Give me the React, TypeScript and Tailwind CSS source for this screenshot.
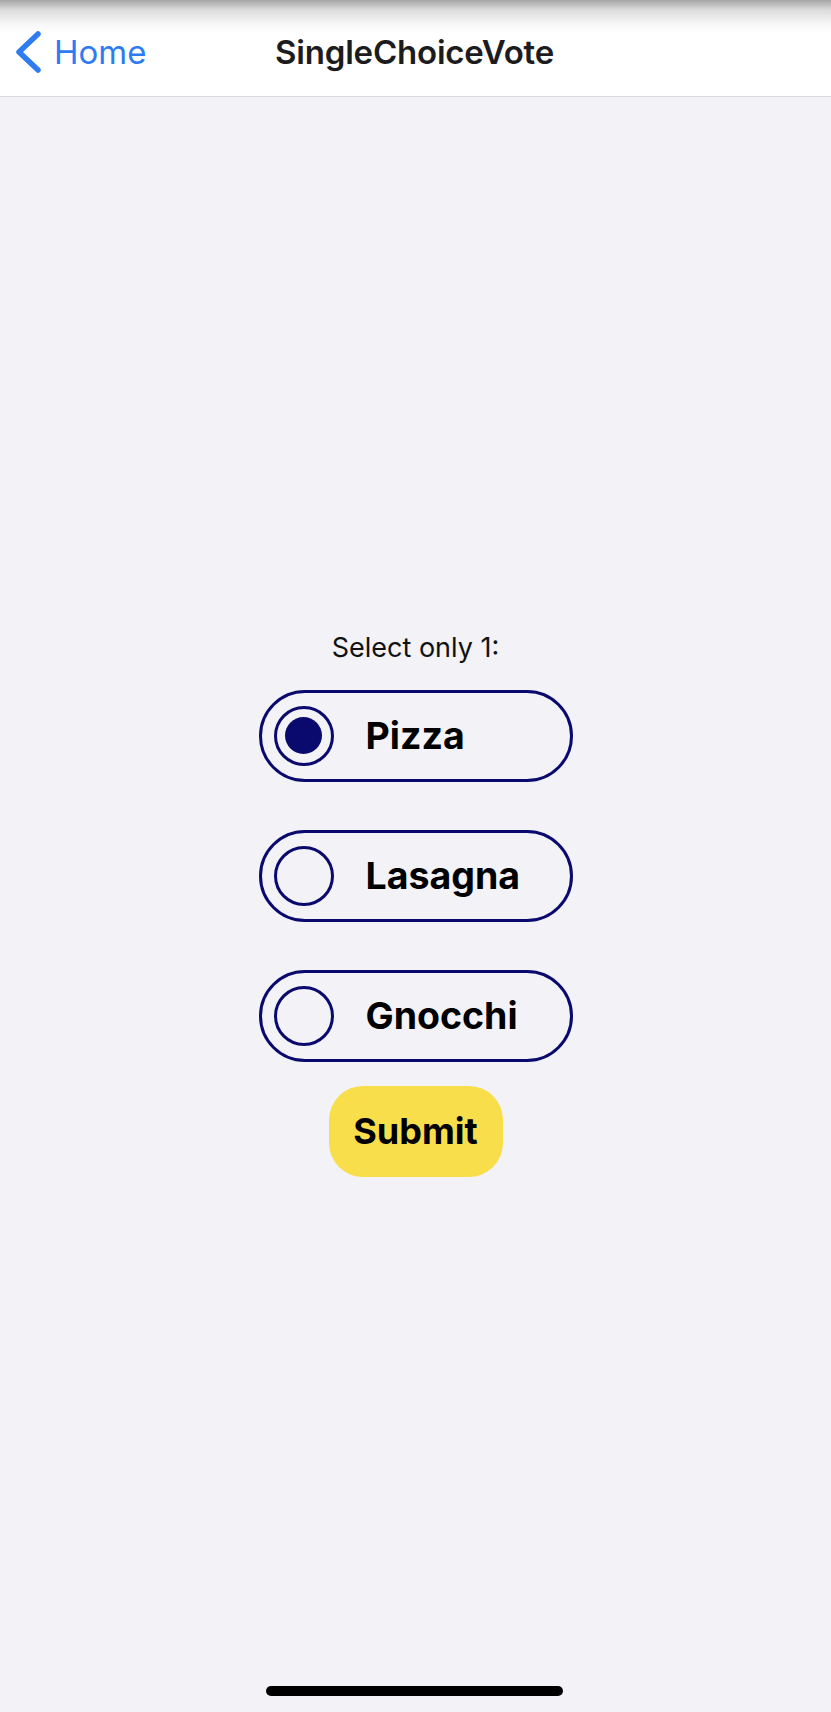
import { useState } from "react";

const options = ["Pizza", "Lasagna", "Gnocchi"];

const App = () => {
  const [selected, setSelected] = useState("Pizza");

  return (
    <div className="relative flex h-screen w-full flex-col bg-[#f2f2f7] font-['Inter','Liberation_Sans',sans-serif]">
      {/* Header */}
      <header className="flex h-[97px] shrink-0 items-center border-b border-[#d9d9de] bg-[linear-gradient(to_bottom,#a6a6a6_0px,#dcdcdc_10px,#f7f7f7_24px,#ffffff_34px)] pt-[8px]">
        <div className="flex w-[178px] items-center pl-[14px]">
          <svg width="28" height="44" viewBox="0 0 28 44" className="shrink-0">
            <polyline
              points="24,4 5,22 24,40"
              fill="none"
              stroke="#2f7cf2"
              strokeWidth="5.5"
              strokeLinecap="round"
              strokeLinejoin="round"
            />
          </svg>
          <span className="ml-[12px] text-[33px] leading-none text-[#2f7cf2]">Home</span>
        </div>
        <h1 className="ml-[97px] text-[33px] font-semibold leading-none tracking-[-0.2px] text-[#1c1c1e]">
          SingleChoiceVote
        </h1>
      </header>

      {/* Body */}
      <main className="flex flex-1 flex-col items-center justify-center pb-[1px]">
        <p className="text-[27px] leading-[32px] text-[#111]">Select only 1:</p>

        <div className="mt-[26px] flex flex-col gap-[48px]">
          {options.map((opt) => (
            <button
              key={opt}
              onClick={() => setSelected(opt)}
              className="flex h-[92px] w-[314px] items-center rounded-full border-[3.5px] border-[#0a0a6e] pl-[12px]"
            >
              <span className="flex h-[60px] w-[60px] items-center justify-center rounded-full border-[3.5px] border-[#0a0a6e]">
                {selected === opt && <span className="h-[37px] w-[37px] rounded-full bg-[#0a0a6e]" />}
              </span>
              <span className="ml-[32px] text-[37.5px] font-bold leading-none text-black">{opt}</span>
            </button>
          ))}
        </div>

        <button className="mt-[24px] flex h-[91px] w-[174px] items-center justify-center rounded-[34px] bg-[#f9de4b] text-[36px] font-bold text-black">
          Submit
        </button>
      </main>

      {/* Home indicator */}
      <div className="absolute bottom-[16px] left-[266px] h-[10px] w-[297px] rounded-full bg-black" />
    </div>
  );
};

export default App;
